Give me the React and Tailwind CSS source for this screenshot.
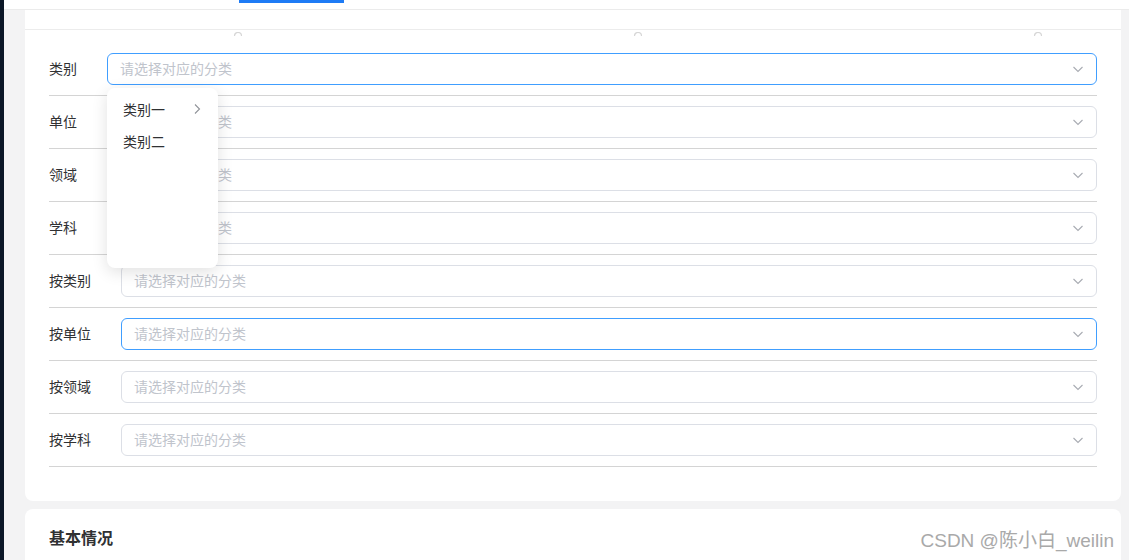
import React from "react";

const rows = [
  { label: "类别", focus: true },
  { label: "单位" },
  { label: "领域" },
  { label: "学科" },
  { label: "按类别" },
  { label: "按单位", focus: true },
  { label: "按领域" },
  { label: "按学科" },
];

const ChevronDown = () => (
  <svg width="12" height="12" viewBox="0 0 12 12" className="text-[#a8abb2]">
    <path d="M1.5 4 L6 8.5 L10.5 4" fill="none" stroke="currentColor" strokeWidth="1.1" />
  </svg>
);

const ChevronRight = () => (
  <svg width="10" height="12" viewBox="0 0 10 12" className="text-[#909399]">
    <path d="M3 1.5 L7.5 6 L3 10.5" fill="none" stroke="currentColor" strokeWidth="1.1" />
  </svg>
);

const Arc = () => (
  <svg width="10" height="4" viewBox="0 0 10 4">
    <path d="M1.5 4 A3.5 3.5 0 0 1 8.5 4" fill="none" stroke="#d6d6d6" strokeWidth="1.2" />
  </svg>
);

const App = () => {
  return (
    <div
      className="relative w-[1129px] h-[560px] overflow-hidden bg-[#f3f3f4] flex"
      style={{ fontFamily: '"Noto Sans CJK SC", "Noto Sans", sans-serif' }}
    >
      {/* dark side strip */}
      <div className="w-[4px] h-full bg-[#0b1727] shrink-0" />

      <div className="flex-1 flex flex-col">
        {/* tab header */}
        <div className="h-[10px] bg-white border-b border-[#ebebeb] shrink-0 relative">
          <div className="absolute left-[235px] top-0 w-[105px] h-[3px] bg-[#1e7bf5]" />
        </div>

        <div className="pl-[21px] pr-[8px] flex flex-col gap-[8px]">
          {/* main card */}
          <div className="bg-white rounded-b-lg">
            <div className="h-[20px] border-b border-[#ececec]" />
            <div className="flex pl-[208px] gap-[390px] h-[2px] pt-[2px]">
              <Arc />
              <Arc />
              <Arc />
            </div>
            <div className="px-[24px] pt-[11px] pb-[34px]">
              {rows.map((row, i) => (
                <div
                  key={row.label}
                  className="relative flex items-center py-[10px] border-b border-[#d4d4d4]"
                >
                  <span className="text-[14px] text-[#303133] mr-[30px] leading-none pb-[3px]">
                    {row.label}
                  </span>
                  <div
                    className={
                      row.focus
                        ? "flex-1 h-[32px] rounded-[6px] border border-[#409eff] flex items-center justify-between pl-[12px] pr-[12px]"
                        : "flex-1 h-[32px] rounded-[6px] border border-[#dcdfe6] flex items-center justify-between pl-[12px] pr-[12px]"
                    }
                  >
                    <span className="text-[14px] leading-[20px] text-[#c0c4cc] pb-[2px]">请选择对应的分类</span>
                    <ChevronDown />
                  </div>

                  {i === 0 && (
                    <div className="absolute left-[58px] top-[45px] z-10 w-[111px] h-[180px] bg-white rounded-[8px] shadow-[0_4px_16px_rgba(0,0,0,0.12)] py-[5px]">
                      <div className="h-[32px] flex items-center justify-between pl-[16px] pr-[16px] text-[14px] text-[#303133]">
                        <span>类别一</span>
                        <ChevronRight />
                      </div>
                      <div className="h-[32px] flex items-center pl-[16px] text-[14px] text-[#303133]">
                        <span>类别二</span>
                      </div>
                    </div>
                  )}
                </div>
              ))}
            </div>
          </div>

          {/* second card */}
          <div className="bg-white rounded-t-lg h-[60px] px-[24px] pt-[16px]">
            <h2 className="text-[16px] font-bold text-[#303133]">基本情况</h2>
          </div>
        </div>
      </div>

      {/* watermark */}
      <div
        className="absolute right-[15px] bottom-[5px] text-[19px] text-[#a9a9a9] [text-shadow:0_0_2px_#fff]"
        style={{ fontFamily: '"Liberation Sans", "Noto Sans CJK SC", sans-serif' }}
      >
        CSDN @陈小白_weilin
      </div>
    </div>
  );
};

export default App;
